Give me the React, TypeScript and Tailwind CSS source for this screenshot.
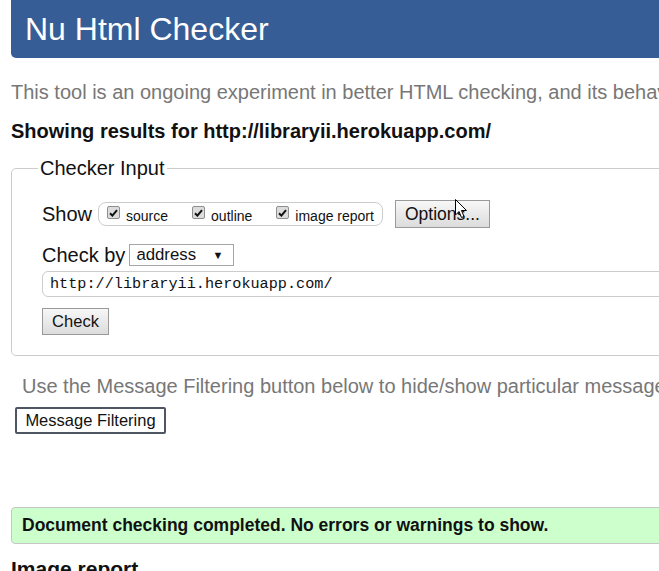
import React from "react"

function Box({ label }: { label: string }) {
  return (
    <label className="flex items-center gap-[6px] text-[14px] leading-[16px]">
      <span className="relative -top-[3px] flex h-[13px] w-[13px] items-center justify-center rounded-[2px] border border-[#8f8f8f] bg-[#dcdcdc]">
        <svg width="9" height="8" viewBox="0 0 9 8">
          <path d="M1 4.2 L3.4 6.6 L8 1.2" fill="none" stroke="#111" strokeWidth="2" />
        </svg>
      </span>
      {label}
    </label>
  )
}

export default function App() {
  return (
    <div
      className="relative h-[571px] w-[659px] overflow-hidden bg-white text-[#111]"
      style={{ fontFamily: '"Liberation Sans", Arial, sans-serif' }}
    >
      <div className="w-[1100px] pl-[11px]">
        {/* header */}
        <div className="flex h-[58px] items-center rounded-b-[5px] bg-[#365d95] pl-[14px]">
          <h1 className="text-[32px] leading-none text-white">Nu Html Checker</h1>
        </div>

        <p className="mt-[22px] whitespace-nowrap text-[20px] leading-[25px] text-[#777]">
          This tool is an ongoing experiment in better HTML checking, and its behavior remains subject to change
        </p>

        <p className="mt-[14px] whitespace-nowrap text-[20px] font-bold leading-[25px]">
          Showing results for http://libraryii.herokuapp.com/
        </p>

        {/* checker input */}
        <fieldset className="mt-[12px] rounded-[5px] border border-[#cccccc] px-[30px] pb-[20px] pt-[20px]">
          <legend className="-ml-[4px] px-[2px] text-[20px] leading-[24px]">Checker Input</legend>

          <div className="flex h-[28px] items-center">
            <span className="text-[20px] leading-[24px]">Show</span>
            <div className="ml-[6px] flex h-[24px] items-center gap-[24px] rounded-[8px] border border-[#cccccc] pl-[8px] pr-[8px] pt-[3px]">
              <Box label="source" />
              <Box label="outline" />
              <Box label="image report" />
            </div>
            <button className="ml-[12px] h-[28px] w-[95px] border border-[#9a9a9a] bg-gradient-to-b from-[#f7f7f7] to-[#dcdcdc] text-[17.5px]">
              Options...
            </button>
          </div>

          <div className="mt-[15px] flex h-[24px] items-center">
            <span className="text-[20px] leading-[24px]">Check by</span>
            <div className="ml-[4px] flex h-[22px] w-[105px] items-center justify-between border border-[#a6a6a6] pl-[6px] pr-[10px] text-[16.8px]">
              <span>address</span>
              <span className="text-[11px]">▼</span>
            </div>
          </div>

          <div
            className="mt-[4px] flex h-[26px] w-[1000px] items-center rounded-[6px] border border-[#cccccc] pl-[7px] text-[15.2px]"
            style={{ fontFamily: '"Liberation Mono", "DejaVu Sans Mono", monospace' }}
          >
            http://libraryii.herokuapp.com/
          </div>

          <button className="mt-[11px] h-[27px] w-[67px] border border-[#9a9a9a] bg-gradient-to-b from-[#f7f7f7] to-[#dcdcdc] text-[16.5px]">
            Check
          </button>
        </fieldset>

        <p className="mt-[18px] whitespace-nowrap pl-[11px] text-[20px] leading-[25px] text-[#777]">
          Use the Message Filtering button below to hide/show particular messages, and to see total counts.
        </p>

        <button className="ml-[4px] mt-[8px] h-[27px] w-[151px] rounded-[2px] border-2 border-[#4f5563] bg-white text-[16.5px] leading-none">
          Message Filtering
        </button>

        <div className="mt-[73px] flex h-[37px] items-center rounded-[4px] border border-[#c6c6c6] bg-[#ccffcc] pl-[10px] text-[17.5px] font-bold">
          Document checking completed. No errors or warnings to show.
        </div>

        <h2 className="mt-[13px] text-[21px] font-bold leading-[24px]">Image report</h2>
      </div>

      {/* mouse cursor */}
      <svg className="absolute left-[455px] top-[199px]" width="13" height="20" viewBox="0 0 13 20">
        <path d="M0.5 0.5 L0.5 16 L4 12.5 L6.5 18.5 L9 17.5 L6.5 11.5 L11.5 11.5 Z" fill="#fff" stroke="#000" strokeWidth="1" />
      </svg>
    </div>
  )
}
